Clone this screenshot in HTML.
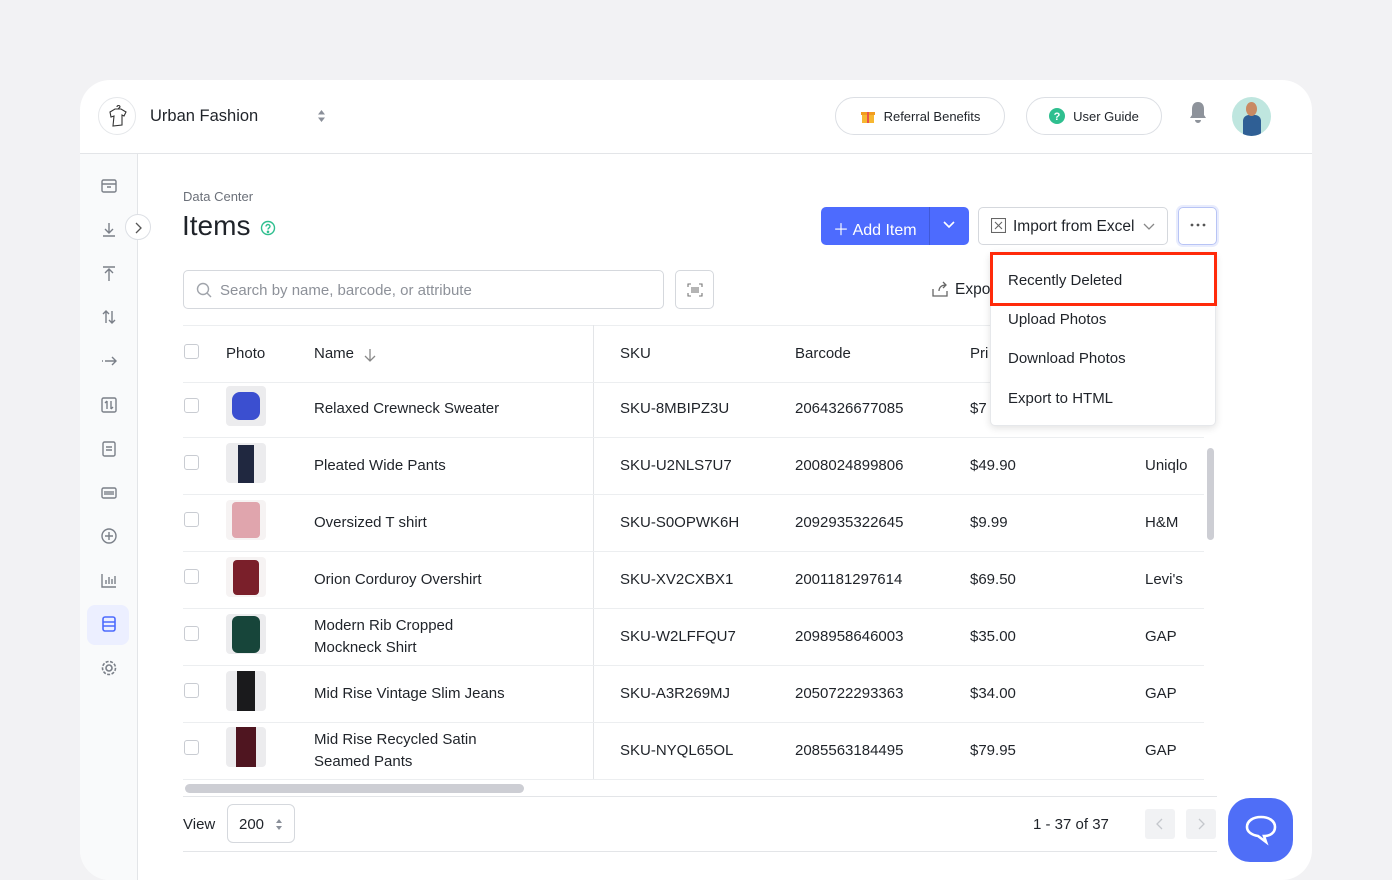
<!DOCTYPE html>
<html><head><meta charset="utf-8"><style>
*{box-sizing:border-box;margin:0;padding:0}
body{width:1392px;height:870px;background:#f2f2f4;font-family:"Liberation Sans",sans-serif;color:#1f2329;position:relative;overflow:hidden}
.card{position:absolute;left:80px;top:80px;width:1232px;height:800px;background:#fff;border-radius:30px;overflow:hidden}
.hdr{position:absolute;left:0;top:0;width:1232px;height:74px;border-bottom:1px solid #e3e5e8}
.side{position:absolute;left:0;top:74px;width:58px;height:730px;background:#f9fafb;border-right:1px solid #e3e5e8}
.abs{position:absolute}
.pill{position:absolute;height:38px;border:1px solid #dcdfe4;border-radius:19px;font-size:13px;display:flex;align-items:center;justify-content:center;gap:8px}
.si{position:absolute;left:20px;width:18px;height:18px}
.t{position:absolute;font-size:15px;white-space:nowrap}
.cb{position:absolute;left:104px;width:15px;height:15px;border:1px solid #c9ccd2;border-radius:3px;background:#fff}
.th{position:absolute;left:146px;width:40px;height:40px;border-radius:4px;background:#ececee;overflow:hidden}
.rl{position:absolute;left:103px;width:1021px;height:1px;background:#eceef0}
.mi{position:absolute;left:28px;font-size:15px}
</style></head><body>
<div class="card">
 <div class="hdr">
  <div class="abs" style="left:18px;top:17px;width:38px;height:38px;border-radius:50%;border:1px solid #e5e7ea"></div>
  <svg class="abs" style="left:26px;top:23px" width="24" height="26" viewBox="0 0 24 26" fill="none" stroke="#333" stroke-width="1.1"><path d="M11 4c0-2 3-2 3 0l-2 2M4 9l5-3 6 0 5 3-2 4-2-1v10l-9 1 1-10-3 1z"/></svg>
  <div class="t" style="left:70px;top:27px;font-size:16.5px">Urban Fashion</div>
  <svg class="abs" style="left:237px;top:29px" width="9" height="14"><path d="M4.5 1l3.5 4.5h-7zM4.5 13l3.5-4.5h-7z" fill="#8a8f99"/></svg>
  <div class="pill" style="left:755px;top:17px;width:170px"><svg width="16" height="16"><rect x="2" y="6" width="12" height="9" fill="#f7b731"/><rect x="1" y="4" width="14" height="3" fill="#f29c1f"/><rect x="7" y="4" width="2" height="11" fill="#e8524a"/></svg>Referral Benefits</div>
  <div class="pill" style="left:946px;top:17px;width:136px"><svg width="16" height="16"><circle cx="8" cy="8" r="8" fill="#2fbf8f"/><text x="8" y="12" font-size="11" text-anchor="middle" fill="#fff" font-family="Liberation Sans" font-weight="bold">?</text></svg>User Guide</div>
  <svg class="abs" style="left:1108px;top:20px" width="20" height="24"><path d="M10 2c-4 0-6 3-6 7v6l-2 3h16l-2-3V9c0-4-2-7-6-7z M7 20a3 3 0 006 0z" fill="#8e939b"/></svg>
  <div class="abs" style="left:1152px;top:17px;width:39px;height:39px;border-radius:50%;background:#bfe6df;overflow:hidden"><div class="abs" style="left:11px;top:18px;width:18px;height:22px;background:#2f5f95;border-radius:6px 6px 0 0"></div><div class="abs" style="left:14px;top:5px;width:11px;height:14px;background:#c98a63;border-radius:50%"></div></div>
 </div>
 <div class="side">
  <svg class="si" style="top:23px" viewBox="0 0 18 18" fill="none" stroke="#7a7f88" stroke-width="1.4"><rect x="2" y="3" width="14" height="12" rx="1.5"/><path d="M2 7h14M7 10h4"/></svg>
  <svg class="si" style="top:67px" viewBox="0 0 18 18" fill="none" stroke="#7a7f88" stroke-width="1.4"><path d="M9 2v10M5 8l4 4 4-4M3 15h12"/></svg>
  <svg class="si" style="top:111px" viewBox="0 0 18 18" fill="none" stroke="#7a7f88" stroke-width="1.4"><path d="M9 16V5M5 8l4-4 4 4M3 2h12"/></svg>
  <svg class="si" style="top:154px" viewBox="0 0 18 18" fill="none" stroke="#7a7f88" stroke-width="1.4"><path d="M6 15V3M3 6l3-3 3 3M12 3v12M9 12l3 3 3-3"/></svg>
  <svg class="si" style="top:198px" viewBox="0 0 18 18" fill="none" stroke="#7a7f88" stroke-width="1.4"><path d="M2 9h1M5 9h11M12 5l4 4-4 4"/></svg>
  <svg class="si" style="top:242px" viewBox="0 0 18 18" fill="none" stroke="#7a7f88" stroke-width="1.4"><rect x="2" y="2" width="14" height="14" rx="1.5"/><path d="M7 5v8M5 7l2-2M11 13V5M13 11l-2 2"/></svg>
  <svg class="si" style="top:286px" viewBox="0 0 18 18" fill="none" stroke="#7a7f88" stroke-width="1.4"><rect x="3" y="2" width="12" height="14" rx="1.5"/><path d="M6 7h6M6 10h6"/></svg>
  <svg class="si" style="top:330px" viewBox="0 0 18 18" fill="none" stroke="#7a7f88" stroke-width="1.4"><rect x="2" y="4" width="14" height="10" rx="1.5"/><path d="M5 7v4M7 7v4M9 7v4M11 7v4M13 7v4"/></svg>
  <svg class="si" style="top:373px" viewBox="0 0 18 18" fill="none" stroke="#7a7f88" stroke-width="1.4"><circle cx="9" cy="9" r="7"/><path d="M9 5v8M5 9h8"/></svg>
  <svg class="si" style="top:417px" viewBox="0 0 18 18" fill="none" stroke="#7a7f88" stroke-width="1.4"><path d="M2 3v13h14M6 13V9M9 13V6M12 13V8M15 13V5"/></svg>
  <div class="abs" style="left:7px;top:451px;width:42px;height:40px;border-radius:8px;background:#ecefff"></div>
  <svg class="si" style="top:461px" viewBox="0 0 18 18" fill="none" stroke="#4d6bfe" stroke-width="1.6"><rect x="3" y="2" width="12" height="14" rx="2"/><path d="M3 7h12M3 11h12"/></svg>
  <svg class="si" style="top:505px" viewBox="0 0 18 18" fill="none" stroke="#7a7f88" stroke-width="1.6"><circle cx="9" cy="9" r="3"/><circle cx="9" cy="9" r="6.5" stroke-dasharray="3 1.5"/></svg>
 </div>
 <div class="abs" style="left:45px;top:134px;width:26px;height:26px;border-radius:50%;border:1px solid #dcdfe4;background:#fff"><svg class="abs" style="left:8px;top:7px" width="8" height="12"><path d="M2 1l5 5-5 5" stroke="#555" fill="none" stroke-width="1.3"/></svg></div>

 <div class="t" style="left:103px;top:109px;font-size:13px;color:#6b7079">Data Center</div>
 <div class="t" style="left:102px;top:130px;font-size:28px">Items</div>
 <svg class="abs" style="left:180px;top:140px" width="16" height="16" fill="none" stroke="#2fbf8f" stroke-width="1.4"><circle cx="8" cy="8" r="6.5"/><path d="M6 6.5a2 2 0 114 0c0 1.2-2 1.4-2 3"/><circle cx="8" cy="11.8" r=".6" fill="#2fbf8f"/></svg>

 <div class="abs" style="left:741px;top:127px;width:148px;height:38px;border-radius:5px;background:#4d6bfe;color:#fff"><div class="t" style="left:12px;top:9px;font-size:16px">＋ Add Item</div><div class="abs" style="left:108px;top:0;width:1px;height:38px;background:#3f59d8"></div><svg class="abs" style="left:122px;top:14px" width="12" height="8"><path d="M1 1l5 5 5-5" stroke="#fff" fill="none" stroke-width="1.6"/></svg></div>
 <div class="abs" style="left:898px;top:127px;width:190px;height:38px;border-radius:5px;border:1px solid #d5d8dd"><svg class="abs" style="left:12px;top:10px" width="15" height="15" fill="none" stroke="#666" stroke-width="1.1"><rect x=".5" y=".5" width="14" height="14"/><path d="M4 4l7 7M11 4l-7 7"/></svg><div class="t" style="left:34px;top:10px;font-size:15.5px">Import from Excel</div><svg class="abs" style="left:164px;top:15px" width="12" height="8"><path d="M1 1l5 5 5-5" stroke="#888" fill="none" stroke-width="1.3"/></svg></div>
 <div class="abs" style="left:1098px;top:127px;width:39px;height:38px;border-radius:5px;border:1px solid #b8c4f5;box-shadow:0 0 0 2px #e8ecfd"><svg class="abs" style="left:11px;top:15px" width="16" height="5"><circle cx="2" cy="2" r="1.4" fill="#555"/><circle cx="8" cy="2" r="1.4" fill="#555"/><circle cx="14" cy="2" r="1.4" fill="#555"/></svg></div>

 <div class="abs" style="left:103px;top:190px;width:481px;height:39px;border:1px solid #d5d8dd;border-radius:5px"><svg class="abs" style="left:12px;top:11px" width="16" height="16" fill="none" stroke="#a0a4ab" stroke-width="1.4"><circle cx="7" cy="7" r="5.5"/><path d="M11 11l4 4"/></svg><div class="t" style="left:36px;top:11px;color:#8d9199">Search by name, barcode, or attribute</div></div>
 <div class="abs" style="left:595px;top:190px;width:39px;height:39px;border:1px solid #d5d8dd;border-radius:5px"><svg class="abs" style="left:11px;top:12px" width="16" height="14" fill="none" stroke="#777" stroke-width="1.1"><path d="M1 4V1h3M12 1h3v3M15 10v3h-3M4 13H1v-3M5 4v6M7 4v6M9 4v6M11 4v6"/></svg></div>
 <svg class="abs" style="left:851px;top:200px" width="18" height="18" fill="none" stroke="#666" stroke-width="1.3"><path d="M2 9v7h14v-5M8 11c0-4 3-6 7-6M12 2l3 3-3 3"/></svg>
 <div class="t" style="left:875px;top:201px;font-size:15.5px">Expo</div>

 <div class="rl" style="top:245px"></div>
 <div class="abs" style="left:513px;top:245px;width:1px;height:454px;background:#e3e5e8"></div>
 <div class="cb" style="top:264px"></div>
 <div class="t" style="left:146px;top:265px">Photo</div>
 <div class="t" style="left:234px;top:265px">Name</div>
 <svg class="abs" style="left:284px;top:268px" width="12" height="14" fill="none" stroke="#888" stroke-width="1.3"><path d="M6 1v12M1 8l5 5 5-5"/></svg>
 <div class="t" style="left:540px;top:265px">SKU</div>
 <div class="t" style="left:715px;top:265px">Barcode</div>
 <div class="t" style="left:890px;top:265px">Pri</div>
 <div class="rl" style="top:302px"></div>

 <div class="cb" style="top:318px"></div><div class="th" style="top:306px"><div class="abs" style="left:6px;top:6px;width:28px;height:28px;background:#3b4fd0;border-radius:8px"></div></div>
 <div class="t" style="left:234px;top:320px">Relaxed Crewneck Sweater</div><div class="t" style="left:540px;top:320px">SKU-8MBIPZ3U</div><div class="t" style="left:715px;top:320px">2064326677085</div><div class="t" style="left:890px;top:320px">$7</div>
 <div class="rl" style="top:357px"></div>

 <div class="cb" style="top:375px"></div><div class="th" style="top:363px"><div class="abs" style="left:12px;top:2px;width:16px;height:38px;background:#202840"></div></div>
 <div class="t" style="left:234px;top:377px">Pleated Wide Pants</div><div class="t" style="left:540px;top:377px">SKU-U2NLS7U7</div><div class="t" style="left:715px;top:377px">2008024899806</div><div class="t" style="left:890px;top:377px">$49.90</div><div class="t" style="left:1065px;top:377px">Uniqlo</div>
 <div class="rl" style="top:414px"></div>

 <div class="cb" style="top:432px"></div><div class="th" style="top:420px;background:#f6f3f3"><div class="abs" style="left:6px;top:2px;width:28px;height:36px;background:#e0a5ad;border-radius:4px"></div></div>
 <div class="t" style="left:234px;top:434px">Oversized T shirt</div><div class="t" style="left:540px;top:434px">SKU-S0OPWK6H</div><div class="t" style="left:715px;top:434px">2092935322645</div><div class="t" style="left:890px;top:434px">$9.99</div><div class="t" style="left:1065px;top:434px">H&amp;M</div>
 <div class="rl" style="top:471px"></div>

 <div class="cb" style="top:489px"></div><div class="th" style="top:477px;background:#f6f3f3"><div class="abs" style="left:7px;top:3px;width:26px;height:35px;background:#7a1f2a;border-radius:4px"></div></div>
 <div class="t" style="left:234px;top:491px">Orion Corduroy Overshirt</div><div class="t" style="left:540px;top:491px">SKU-XV2CXBX1</div><div class="t" style="left:715px;top:491px">2001181297614</div><div class="t" style="left:890px;top:491px">$69.50</div><div class="t" style="left:1065px;top:491px">Levi's</div>
 <div class="rl" style="top:528px"></div>

 <div class="cb" style="top:546px"></div><div class="th" style="top:534px"><div class="abs" style="left:6px;top:2px;width:28px;height:37px;background:#17453a;border-radius:6px"></div></div>
 <div class="t" style="left:234px;top:537px">Modern Rib Cropped</div><div class="t" style="left:234px;top:559px">Mockneck Shirt</div><div class="t" style="left:540px;top:548px">SKU-W2LFFQU7</div><div class="t" style="left:715px;top:548px">2098958646003</div><div class="t" style="left:890px;top:548px">$35.00</div><div class="t" style="left:1065px;top:548px">GAP</div>
 <div class="rl" style="top:585px"></div>

 <div class="cb" style="top:603px"></div><div class="th" style="top:591px"><div class="abs" style="left:11px;top:0;width:18px;height:40px;background:#1a1a1c"></div></div>
 <div class="t" style="left:234px;top:605px">Mid Rise Vintage Slim Jeans</div><div class="t" style="left:540px;top:605px">SKU-A3R269MJ</div><div class="t" style="left:715px;top:605px">2050722293363</div><div class="t" style="left:890px;top:605px">$34.00</div><div class="t" style="left:1065px;top:605px">GAP</div>
 <div class="rl" style="top:642px"></div>

 <div class="cb" style="top:660px"></div><div class="th" style="top:647px"><div class="abs" style="left:10px;top:0;width:20px;height:40px;background:#4f1520"></div></div>
 <div class="t" style="left:234px;top:651px">Mid Rise Recycled Satin</div><div class="t" style="left:234px;top:673px">Seamed Pants</div><div class="t" style="left:540px;top:662px">SKU-NYQL65OL</div><div class="t" style="left:715px;top:662px">2085563184495</div><div class="t" style="left:890px;top:662px">$79.95</div><div class="t" style="left:1065px;top:662px">GAP</div>
 <div class="rl" style="top:699px"></div>

 <div class="abs" style="left:1127px;top:368px;width:7px;height:92px;border-radius:4px;background:#cdced4"></div>
 <div class="abs" style="left:105px;top:704px;width:339px;height:9px;border-radius:5px;background:#cdced4"></div>
 <div class="abs" style="left:103px;top:716px;width:1034px;height:1px;background:#e3e5e8"></div>
 <div class="t" style="left:103px;top:736px">View</div>
 <div class="abs" style="left:147px;top:724px;width:68px;height:39px;border:1px solid #d5d8dd;border-radius:6px"><div class="t" style="left:11px;top:11px">200</div><svg class="abs" style="left:47px;top:13px" width="8" height="13"><path d="M4 1l3 4H1zM4 12l3-4H1z" fill="#8a8f99"/></svg></div>
 <div class="t" style="left:953px;top:736px">1 - 37 of 37</div>
 <div class="abs" style="left:1065px;top:729px;width:30px;height:30px;border-radius:3px;background:#f1f2f4"><svg class="abs" style="left:11px;top:9px" width="8" height="12"><path d="M6 1L1 6l5 5" stroke="#c4c7cc" fill="none" stroke-width="1.3"/></svg></div>
 <div class="abs" style="left:1106px;top:729px;width:30px;height:30px;border-radius:3px;background:#f1f2f4"><svg class="abs" style="left:11px;top:9px" width="8" height="12"><path d="M2 1l5 5-5 5" stroke="#c4c7cc" fill="none" stroke-width="1.3"/></svg></div>
 <div class="abs" style="left:103px;top:771px;width:1034px;height:1px;background:#e3e5e8"></div>

 <div class="abs" style="left:910px;top:172px;width:226px;height:174px;background:#fff;border-radius:5px;box-shadow:0 2px 8px rgba(0,0,0,.12);border:1px solid #e6e8eb">
  <div class="abs" style="left:-1px;top:-1px;width:227px;height:54px;border:3px solid #ff2a0a"></div>
  <div class="mi" style="top:19px;left:17px">Recently Deleted</div>
  <div class="mi" style="top:58px;left:17px">Upload Photos</div>
  <div class="mi" style="top:97px;left:17px">Download Photos</div>
  <div class="mi" style="top:137px;left:17px">Export to HTML</div>
 </div>
</div>
<div class="abs" style="left:1228px;top:798px;width:65px;height:64px;border-radius:22px;background:#4f6ef7"><svg class="abs" style="left:16px;top:16px" width="34" height="32" fill="none" stroke="#fff" stroke-width="2.6"><path d="M17 3c8 0 14 4 14 10s-5 9-11 9l2 6-8-6c-6-1-11-4-11-9 0-6 6-10 14-10z"/></svg></div>
</body></html>
